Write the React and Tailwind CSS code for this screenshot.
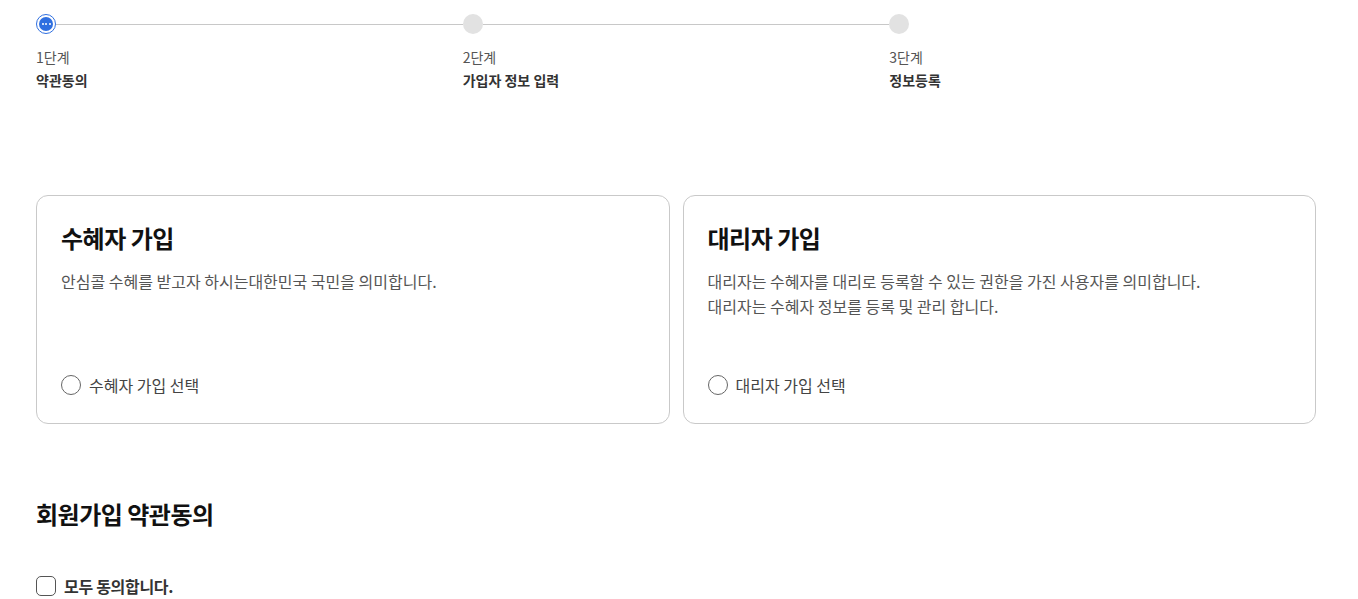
import { useState } from "react";

const STEPS = [
  { no: "1단계", label: "약관동의" },
  { no: "2단계", label: "가입자 정보 입력" },
  { no: "3단계", label: "정보등록" },
];

const TYPES = [
  {
    id: "beneficiary",
    title: "수혜자 가입",
    desc: ["안심콜 수혜를 받고자 하시는대한민국 국민을 의미합니다."],
    option: "수혜자 가입 선택",
  },
  {
    id: "agent",
    title: "대리자 가입",
    desc: [
      "대리자는 수혜자를 대리로 등록할 수 있는 권한을 가진 사용자를 의미합니다.",
      "대리자는 수혜자 정보를 등록 및 관리 합니다.",
    ],
    option: "대리자 가입 선택",
  },
];

function StepDot({ active }) {
  if (active) {
    return (
      <div className="w-5 h-5 rounded-full border border-[#2f6fe0] bg-white flex items-center justify-center shrink-0">
        <div className="w-[14px] h-[14px] rounded-full bg-[#2f6fe0] flex items-center justify-center gap-[1.5px]">
          <span className="w-[2px] h-[2px] rounded-full bg-white" />
          <span className="w-[2px] h-[2px] rounded-full bg-white" />
          <span className="w-[2px] h-[2px] rounded-full bg-white" />
        </div>
      </div>
    );
  }
  return <div className="w-5 h-5 rounded-full bg-[#e2e2e2] shrink-0" />;
}

export default function App() {
  const [type, setType] = useState(null);
  const [agreeAll, setAgreeAll] = useState(false);

  return (
    <div
      className="bg-white min-h-screen px-9 pt-[14px]"
      style={{ fontFamily: '"Noto Sans CJK KR", "Noto Sans", sans-serif' }}
    >
      {/* steps */}
      <div className="grid grid-cols-3 w-[1280px]">
        {STEPS.map((s, i) => (
          <div key={s.no} className="flex flex-col">
            <div className="flex items-center h-5">
              <StepDot active={i === 0} />
              {i < STEPS.length - 1 && <div className="flex-1 h-px bg-[#c8c8c8]" />}
            </div>
            <div className="mt-[13px] text-[14px] leading-[20px] text-[#555]">{s.no}</div>
            <div className="mt-[3px] text-[14px] leading-[20px] font-bold text-[#333]">{s.label}</div>
          </div>
        ))}
      </div>

      {/* join type */}
      <div className="grid grid-cols-2 gap-[13px] w-[1280px] mt-[105px]">
        {TYPES.map((t) => (
          <div
            key={t.id}
            className="h-[229px] border border-[#c9c9c9] rounded-[12px] px-6 pt-[28px] pb-[28px] flex flex-col"
          >
            <h3 className="text-[24px] leading-[28px] font-bold text-[#111] tracking-[-0.5px]">{t.title}</h3>
            <div className="mt-[17px] text-[16px] leading-[25px] text-[#555]">
              {t.desc.map((d) => (
                <p key={d}>{d}</p>
              ))}
            </div>
            <label className="mt-auto flex items-center gap-2 cursor-pointer" onClick={() => setType(t.id)}>
              <span
                className={
                  type === t.id
                    ? "w-5 h-5 rounded-full border-[6px] border-[#2f6fe0] bg-white"
                    : "w-5 h-5 rounded-full border border-[#666] bg-white"
                }
              />
              <span className="text-[16px] leading-[20px] text-[#444]">{t.option}</span>
            </label>
          </div>
        ))}
      </div>

      {/* terms */}
      <h2 className="mt-[74px] text-[24px] leading-[32px] font-bold text-[#111] tracking-[-0.5px]">회원가입 약관동의</h2>
      <label className="mt-[46px] flex items-center gap-2 cursor-pointer" onClick={() => setAgreeAll(!agreeAll)}>
        <span
          className={
            agreeAll
              ? "w-5 h-5 rounded-[5px] bg-[#2f6fe0] border border-[#2f6fe0]"
              : "w-5 h-5 rounded-[5px] border border-[#555] bg-white"
          }
        />
        <span className="text-[16px] leading-[20px] font-bold text-[#333] tracking-[-0.3px]">모두 동의합니다.</span>
      </label>
    </div>
  );
}
